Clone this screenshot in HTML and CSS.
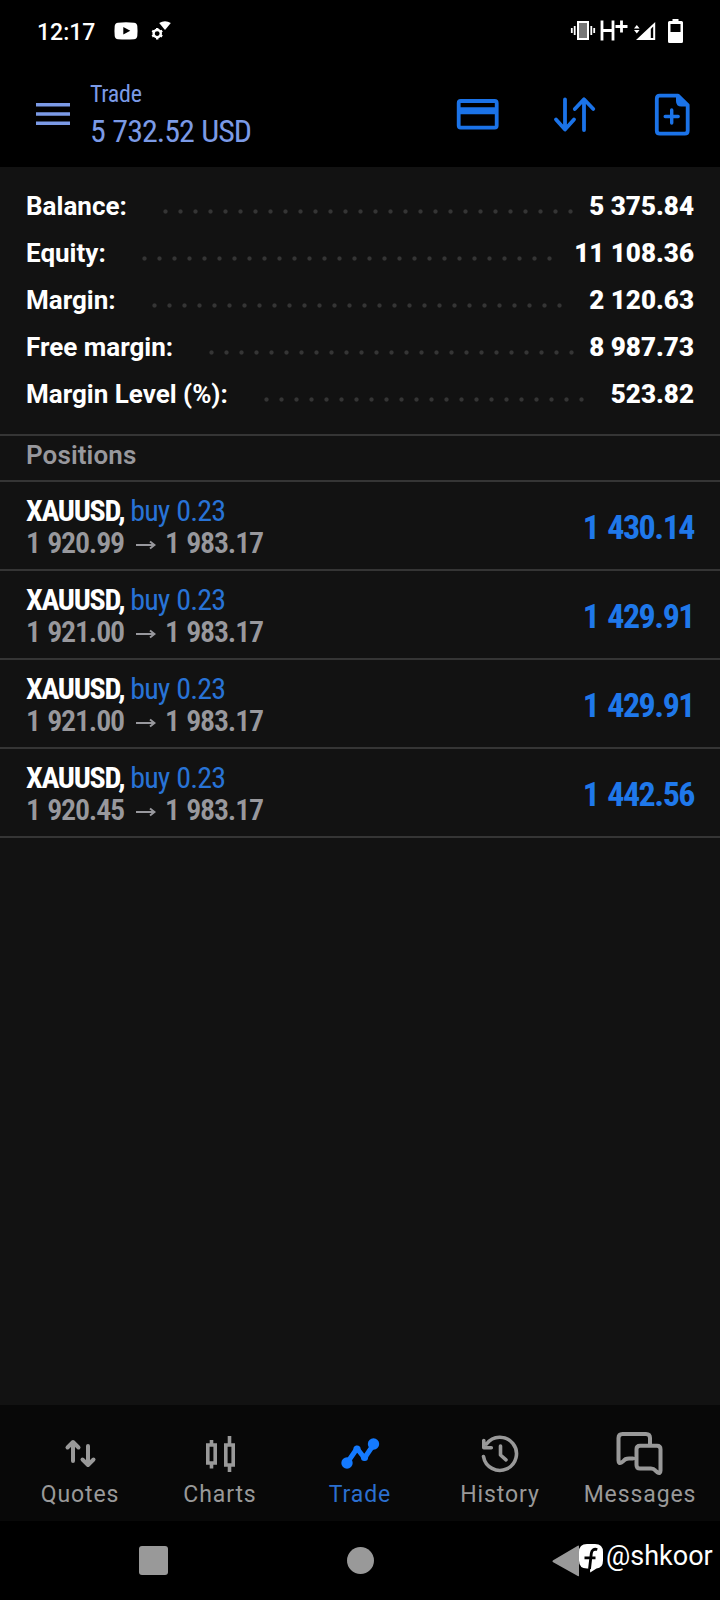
FILE: index.html
```
<!DOCTYPE html>
<html lang="en">
<head>
<meta charset="utf-8">
<title>Trade</title>
<link rel="stylesheet" href="styles.css">
</head>
<body>

<!-- status bar -->
<div class="status">
	<span class="clock">12:17</span>
	<svg class="yt" width="24" height="18" viewBox="0 0 24 18"><path fill="#fff" fill-rule="evenodd" d="M4 .7Q12 0 20 .7 23 1 23.3 4 23.8 9 23.3 14 23 17 20 17.2 12 17.8 4 17.2 1 17 .7 14 .2 9 .7 4 1 1 4 .7zM9.3 5v7.4l7-3.7z"/></svg>
	<svg class="gear" width="20" height="20" viewBox="0 0 20 20"><path fill="#fff" d="M8.2 2Q14-1.4 19.8 2L14 9z"/><circle cx="6.2" cy="12.6" r="3.6" fill="none" stroke="#fff" stroke-width="2.4"/><path stroke="#fff" stroke-width="2.4" d="M6.2 7v2M6.2 16.2v2.2M1.2 9.8l2 1.1M9.2 14.3l2 1.1M1.2 15.4l2-1.1M9.2 10.9l2-1.1"/></svg>
	<svg class="sys" width="116" height="26" viewBox="570 18 116 26">
		<path stroke="#fff" stroke-width="1.8" d="M571.8 28v5M574.7 26v9M594.2 28v5M591.3 26v9"/>
		<path fill="#777" stroke="#fff" stroke-width="2" d="M578 22h10v17h-10z"/>
		<path fill="none" stroke="#fff" stroke-width="2.8" d="M602 20.5v20M613 20.5v20M602 30.5h11M615.5 26.5h12M621.5 20.5v12"/>
		<path fill="#fff" fill-rule="evenodd" d="M655.2 22v18H636zM650.8 29v9h2.4V26.4z"/>
		<path fill="#fff" d="M634 28.5l2.8-3.6 2.8 3.6zM634 30l2.8 3.4 2.8-3.4z"/>
		<path fill="#fff" fill-rule="evenodd" d="M672.5 19h6v2h3q1.5 0 1.5 1.5v19q0 1.5-1.5 1.5h-12q-1.5 0-1.5-1.5v-19q0-1.5 1.5-1.5h3zM670.5 24v8h10v-8z"/>
	</svg>
</div>

<div class="header">
	<svg class="menu" width="34" height="24" viewBox="0 0 34 24"><path stroke="#7b9ae6" stroke-width="3.6" d="M0 2.7h34M0 12h34M0 21.3h34"/></svg>
	<div class="title">
		<div class="small">Trade</div>
		<div class="total">5 732.52 USD</div>
	</div>
	<svg class="act" width="236" height="46" viewBox="456 92 236 46" fill="none" stroke="#1b73e8" stroke-width="3.8" stroke-linecap="round" stroke-linejoin="round">
		<rect x="458.7" y="101" width="38" height="26.6" rx="2"/>
		<path stroke-width="7" stroke-linecap="butt" d="M459 110.8h38"/>
		<path d="M565 99.5v29.5M556 119.5l9 10 9-10M584 130V99.5M574.8 109l9.2-9.7 9.3 9.7"/>
		<path d="M678 95.7h-18.2q-3 0-3 3v32q0 3 3 3h24.9q3 0 3-3v-25.5z"/>
		<path fill="#1b73e8" stroke-width="2" d="M677 96v5q0 4.5 4.5 4.5h5.5z"/>
		<path stroke-width="3.4" d="M671.7 110v13M665.2 116.5h13"/>
	</svg>
</div>

<div class="account">
	<div class="row"><span>Balance:</span><i class="dots d28"></i><b>5 375.84</b></div>
	<div class="row"><span>Equity:</span><i class="dots d28"></i><b>11 108.36</b></div>
	<div class="row"><span>Margin:</span><i class="dots d28"></i><b>2 120.63</b></div>
	<div class="row"><span>Free margin:</span><i class="dots d25"></i><b>8 987.73</b></div>
	<div class="row"><span>Margin Level (%):</span><i class="dots d22"></i><b>523.82</b></div>
</div>

<div class="section">Positions</div>

<div class="positions">
	<div class="pos">
		<div>
			<div class="deal"><b>XAUUSD,</b> <span>buy 0.23</span></div>
			<div class="price">1 920.99 <svg width="20" height="10" viewBox="0 0 20 10"><path d="M0 5h18M14 1.5l4.5 3.5-4.5 3.5"/></svg> 1 983.17</div>
		</div>
		<div class="profit">1 430.14</div>
	</div>
	<div class="pos">
		<div>
			<div class="deal"><b>XAUUSD,</b> <span>buy 0.23</span></div>
			<div class="price">1 921.00 <svg width="20" height="10" viewBox="0 0 20 10"><path d="M0 5h18M14 1.5l4.5 3.5-4.5 3.5"/></svg> 1 983.17</div>
		</div>
		<div class="profit">1 429.91</div>
	</div>
	<div class="pos">
		<div>
			<div class="deal"><b>XAUUSD,</b> <span>buy 0.23</span></div>
			<div class="price">1 921.00 <svg width="20" height="10" viewBox="0 0 20 10"><path d="M0 5h18M14 1.5l4.5 3.5-4.5 3.5"/></svg> 1 983.17</div>
		</div>
		<div class="profit">1 429.91</div>
	</div>
	<div class="pos">
		<div>
			<div class="deal"><b>XAUUSD,</b> <span>buy 0.23</span></div>
			<div class="price">1 920.45 <svg width="20" height="10" viewBox="0 0 20 10"><path d="M0 5h18M14 1.5l4.5 3.5-4.5 3.5"/></svg> 1 983.17</div>
		</div>
		<div class="profit">1 442.56</div>
	</div>
</div>

<!-- bottom tabs -->
<div class="tabs">
	<div class="tab">
		<svg width="50" height="50" viewBox="55 1428 50 50"><path stroke-width="4" d="M73 1461v-18M67.5 1447.5l5.5-5.5 5.5 5.5M88 1446v18M82.5 1459.5l5.5 5.5 5.5-5.5"/></svg>
		<span>Quotes</span>
	</div>
	<div class="tab">
		<svg width="50" height="50" viewBox="195 1428 50 50"><path stroke-width="3.6" stroke-linecap="butt" stroke-linejoin="miter" d="M207.8 1445h7.4v18h-7.4zM225.8 1445h7.4v20h-7.4zM211.5 1440v5M211.5 1463v5.5M229.5 1436v9M229.5 1465v7"/></svg>
		<span>Charts</span>
	</div>
	<div class="tab on">
		<svg width="50" height="50" viewBox="335 1428 50 50"><path stroke-width="5" d="M347 1463l10-14.5 7.5 9.5 9.5-14"/><g class="fill"><circle cx="347" cy="1463" r="5.7"/><circle cx="373.5" cy="1444" r="5.7"/><circle cx="357" cy="1449" r="3.6"/><circle cx="364.5" cy="1457.5" r="3.6"/></g></svg>
		<span>Trade</span>
	</div>
	<div class="tab">
		<svg width="50" height="50" viewBox="475 1428 50 50"><path d="M483.5 1456.5a16.6 16.6 0 1 0 3-12.5M483.8 1440.5v7.3h7.5M500.5 1446v9l5.5 4.8"/></svg>
		<span>History</span>
	</div>
	<div class="tab">
		<svg width="50" height="50" viewBox="616 1428 50 50"><path stroke-width="4" d="M634 1458.5h-4q-4 0-5.5 2.5l-2 1.5q-3 1.5-3-2v-22.5q0-4 4-4h23.5q4 0 4 4v7.5M641 1445.7h17q3.5 0 3.5 3.5v21.5q0 3.5-3.2 1.5l-2.3-2q-1.2-1.7-4-1.7h-11q-3.5 0-3.5-3.5v-15.8q0-3.5 3.5-3.5z"/></svg>
		<span>Messages</span>
	</div>
</div>

<!-- system navigation -->
<div class="nav">
	<i class="sq"></i>
	<i class="home"></i>
	<svg class="back" width="28" height="32" viewBox="0 0 28 32"><path fill="#999" d="M27 1.5v29q0 1.2-1.2.5L1.2 17.2q-1.5-1 0-2L25.8.8q1.2-.6 1.2.7z"/></svg>
	<svg class="fb" width="24" height="29" viewBox="0 0 24 29"><path fill="#fff" d="M8 0h8Q24 0 24 8v8.5q0 7.5-6.5 8l-6.300 3.900L11 24.500H8Q0 24.500 0 16.500V8Q0 0 8 0z"/><path fill="none" stroke="#000" stroke-width="2.8" d="M18.3 5.500q-5.300-1.300-6 4L10.500 25M5.500 13.800h11"/></svg>
	<span class="tag">@shkoor</span>
</div>

</body>
</html>
```
FILE: styles.css
```
body {
	margin: 0;
	width: 720px;
	height: 1600px;
	display: flex;
	flex-direction: column;
	background: #121212;
	color: #fff;
	font-family: Roboto, "Liberation Sans", sans-serif;
	overflow: hidden;
}
svg {
	display: block;
	flex: none;
}
.status {
	height: 62px;
	background: #000;
	display: flex;
	align-items: center;
	box-sizing: border-box;
	padding-left: 37px;
}
.clock {
	width: 77px;
	padding-top: 2px;
	font-size: 23px;
	font-weight: 500;
	white-space: nowrap;
}
.gear {
	margin-left: 13px;
}
.sys {
	margin-left: auto;
	margin-right: 34px;
}

.header {
	height: 105px;
	background: #000;
	display: flex;
	align-items: flex-start;
}
.menu {
	margin: 40px 0 0 36px;
}
.title {
	margin: 18px 0 0 20px;
	color: #7b9ae6;
	font-stretch: 75%;
	font-family: "Roboto Condensed", Roboto, sans-serif;
	white-space: nowrap;
}
.small {
	font-size: 24px;
	line-height: 28px;
	letter-spacing: -.3px;
}
.total {
	margin-top: 4px;
	font-size: 32px;
	line-height: 38px;
	letter-spacing: -1px;
	word-spacing: 1.2px;
}
.act {
	margin: 30px 28px 0 auto;
}

.account {
	height: 252px;
	padding: 15px 26px 0 26px;
}
.row {
	height: 47px;
	display: flex;
	align-items: center;
	font-size: 26px;
	font-weight: 700;
}
.row b {
	margin-left: auto;
}
/* one dot every 15px */
.dots {
	height: 5px;
	margin: 11px 0 0 31px;
	background: radial-gradient(circle, #353535 1.6px, transparent 2.6px) 0 0 / 15px 5px;
}
.d28 { width: 420px; }
.d25 { width: 375px; }
.d22 { width: 330px; }

.section {
	height: 44px;
	border-top: 2px solid #353535;
	border-bottom: 2px solid #353535;
	padding-left: 26px;
	font-size: 26px;
	line-height: 38px;
	font-weight: 600;
	letter-spacing: .1px;
	color: #98989d;
}

.pos {
	height: 87px;
	border-bottom: 2px solid #353535;
	padding: 0 26px 0 26px;
	display: flex;
	justify-content: space-between;
	font-family: "Roboto Condensed", Roboto, sans-serif;
	font-stretch: 75%;
	white-space: nowrap;
}
.deal {
	margin-top: 13px;
	font-size: 30px;
	line-height: 32px;
	letter-spacing: -.9px;
}
.deal b {
	letter-spacing: -1.3px;
}
.deal span {
	color: #2873d6;
	word-spacing: 1px;
}
.price {
	display: flex;
	font-size: 30px;
	line-height: 32px;
	font-weight: 600;
	letter-spacing: -1.2px;
	word-spacing: 1.6px;
	color: #98989d;
}
.price svg {
	margin: 13px 9px 0 12px;
	fill: none;
	stroke: #98989d;
	stroke-width: 2;
}
.profit {
	margin-top: 2px;
	font-size: 34px;
	line-height: 87px;
	font-weight: 700;
	letter-spacing: -1.5px;
	word-spacing: 2.5px;
	color: #1f78ea;
}

.tabs {
	margin-top: auto;
	height: 116px;
	background: #080808;
	display: grid;
	grid-template-columns: repeat(5, 140px);
	padding-left: 10px;
}
.tab {
	display: flex;
	flex-direction: column;
	align-items: center;
	padding-top: 23px;
	font-size: 23px;
	line-height: 32px;
	letter-spacing: .9px;
	color: #999;
}
.tab svg {
	height: 50px;
	margin-bottom: 1px;
	fill: none;
	stroke: #999;
	stroke-width: 3.6;
	stroke-linecap: round;
	stroke-linejoin: round;
}
.on {
	color: #2b6fcf;
}
.on svg {
	stroke: #147aff;
}
.fill {
	fill: #147aff;
	stroke: none;
}

.nav {
	height: 79px;
	background: #000;
	display: flex;
	align-items: center;
}
.sq {
	width: 29px;
	height: 29px;
	margin-left: 139px;
	border-radius: 3px;
	background: #999;
}
.home {
	width: 27px;
	height: 27px;
	margin-left: 179px;
	border-radius: 50%;
	background: #999;
}
.back {
	margin-left: 178px;
}
.fb {
	margin: -4px 0 0 -1px;
}
.tag {
	margin: -9px 0 0 3px;
	font-size: 27px;
}
```
